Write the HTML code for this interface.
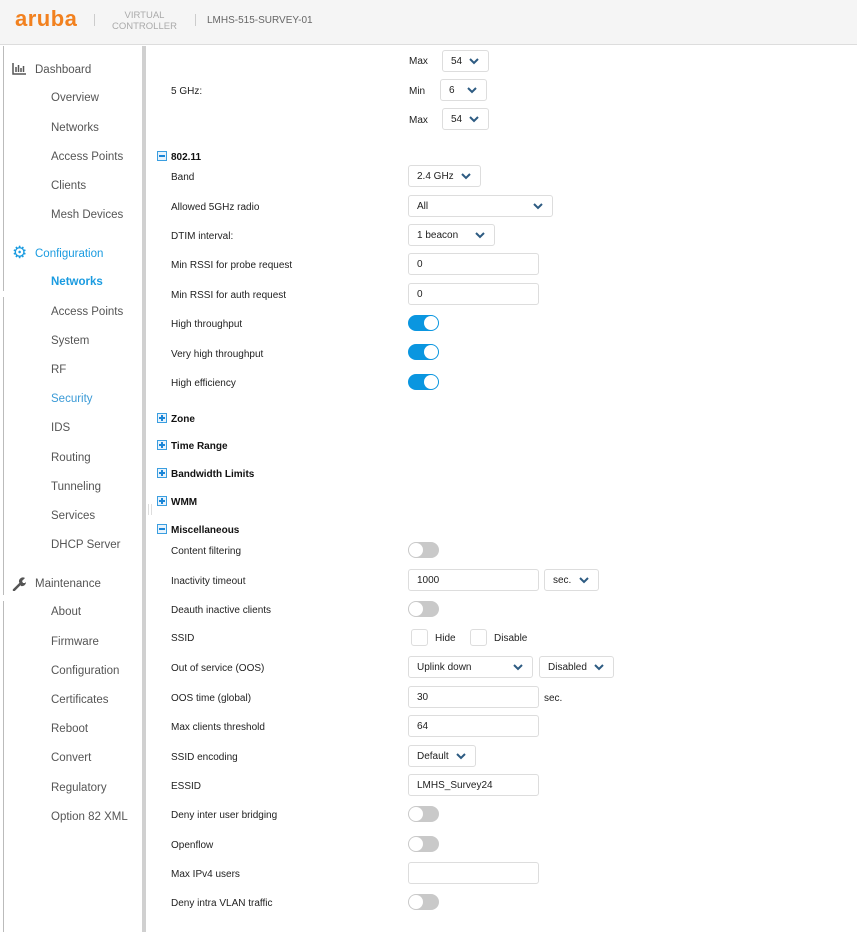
<!DOCTYPE html>
<html><head><meta charset="utf-8"><style>
*{box-sizing:border-box;margin:0;padding:0}
body{width:857px;height:932px;overflow:hidden;background:#fff;font-family:"Liberation Sans",Arial,sans-serif;position:relative;color:#222}
.hdr{position:absolute;left:0;top:0;width:857px;height:45px;background:#f5f5f5;border-bottom:1px solid #ddd}
.a{position:absolute}
.side{font-size:11.5px;color:#555;white-space:nowrap}
.sh{font-size:11.5px;color:#555}
.lb{font-size:10px;color:#222;white-space:nowrap}
.sec{font-size:10px;font-weight:bold;color:#111;white-space:nowrap}
.lb,.sec,.side,.sh{margin-top:2px}
.box{position:absolute;border:1px solid #ddd;border-radius:3px;background:#fff;font-size:10px;color:#222;padding-left:8px;line-height:21px}
.sel svg{position:absolute;right:9px;top:7px}
.tg{position:absolute;width:31px;height:16px;border-radius:8px;background:#c9c9c9}
.tg::after{content:"";position:absolute;left:1px;top:1px;width:14px;height:14px;border-radius:50%;background:#fff}
.tg.on{background:#0a96e0}
.tg.on::after{left:16px}
.pm{position:absolute;left:157px;width:10px;height:10px;border:1px solid #3a9ee0;background:#e8f3fc}
.pm::before{content:"";position:absolute;left:1px;top:3px;width:6px;height:2px;background:#1a86d8}
.pm.p::after{content:"";position:absolute;left:3px;top:1px;width:2px;height:6px;background:#1a86d8}
.cb{position:absolute;width:17px;height:17px;border:1px solid #ddd;border-radius:3px;background:#fff}
</style></head><body>
<div class="hdr"></div>
<div class="a" style="left:15px;top:6px;font-size:22px;font-weight:bold;color:#f2811f;letter-spacing:0.5px">aruba</div>
<div class="a" style="left:94px;top:14px;width:1px;height:12px;background:#ccc"></div>
<div class="a" style="left:112px;top:10px;font-size:9.5px;color:#aaa;text-align:center;line-height:11px">VIRTUAL<br>CONTROLLER</div>
<div class="a" style="left:195px;top:14px;width:1px;height:12px;background:#ccc"></div>
<div class="a" style="left:207px;top:15px;font-size:10px;color:#666">LMHS-515-SURVEY-01</div>
<div class="a" style="left:3px;top:46px;width:1px;height:245px;background:#bbb"></div>
<div class="a" style="left:3px;top:297px;width:1px;height:298px;background:#bbb"></div>
<div class="a" style="left:3px;top:601px;width:1px;height:331px;background:#bbb"></div>
<div class="a" style="left:142px;top:46px;width:4px;height:886px;background:#d0d0d0"></div>
<div class="a" style="left:148px;top:504px;width:1px;height:11px;background:#ddd"></div>
<div class="a" style="left:151px;top:504px;width:1px;height:11px;background:#ddd"></div>

<svg class="a" style="left:12px;top:63px" width="14" height="12"><path d="M1 0v11h13" stroke="#555" stroke-width="1.5" fill="none"/><path d="M4 4v5M6.5 2v7M9 5v4M11.5 3v6" stroke="#555" stroke-width="1.5"/></svg>
<div class="a sh" style="left:35px;top:62px">Dashboard</div>
<div class="a side" style="left:51px;top:90px">Overview</div>
<div class="a side" style="left:51px;top:120px">Networks</div>
<div class="a side" style="left:51px;top:149px">Access Points</div>
<div class="a side" style="left:51px;top:178px">Clients</div>
<div class="a side" style="left:51px;top:207px">Mesh Devices</div>
<div class="a" style="left:12px;top:244px;font-size:17px;color:#1a9be0;line-height:17px">⚙</div>
<div class="a sh" style="left:35px;top:246px;color:#1a9be0">Configuration</div>
<div class="a side" style="left:51px;top:274px;color:#1a9be0;font-weight:bold">Networks</div>
<div class="a side" style="left:51px;top:304px">Access Points</div>
<div class="a side" style="left:51px;top:333px">System</div>
<div class="a side" style="left:51px;top:362px">RF</div>
<div class="a side" style="left:51px;top:391px;color:#3a9ad6">Security</div>
<div class="a side" style="left:51px;top:420px">IDS</div>
<div class="a side" style="left:51px;top:450px">Routing</div>
<div class="a side" style="left:51px;top:479px">Tunneling</div>
<div class="a side" style="left:51px;top:508px">Services</div>
<div class="a side" style="left:51px;top:537px">DHCP Server</div>
<svg class="a" style="left:12px;top:577px" width="14" height="14"><path d="M2 13l6-6" stroke="#555" stroke-width="2.5" stroke-linecap="round"/><path d="M7 5a4 4 0 0 1 6-4l-3 3 1 2 2 0 1-1a4 4 0 0 1-5 4z" fill="#555"/></svg>
<div class="a sh" style="left:35px;top:576px">Maintenance</div>
<div class="a side" style="left:51px;top:604px">About</div>
<div class="a side" style="left:51px;top:634px">Firmware</div>
<div class="a side" style="left:51px;top:663px">Configuration</div>
<div class="a side" style="left:51px;top:692px">Certificates</div>
<div class="a side" style="left:51px;top:721px">Reboot</div>
<div class="a side" style="left:51px;top:750px">Convert</div>
<div class="a side" style="left:51px;top:780px">Regulatory</div>
<div class="a side" style="left:51px;top:809px">Option 82 XML</div>

<!-- content -->
<div class="a lb" style="left:409px;top:54px">Max</div>
<div class="box sel" style="left:442px;top:50px;width:47px;height:22px">54<svg width="10" height="7"><path d="M1 1l4 4 4-4" stroke="#2d5b82" stroke-width="2" fill="none"/></svg></div>
<div class="a lb" style="left:171px;top:84px">5 GHz:</div>
<div class="a lb" style="left:409px;top:84px">Min</div>
<div class="box sel" style="left:440px;top:79px;width:47px;height:22px">6<svg width="10" height="7"><path d="M1 1l4 4 4-4" stroke="#2d5b82" stroke-width="2" fill="none"/></svg></div>
<div class="a lb" style="left:409px;top:113px">Max</div>
<div class="box sel" style="left:442px;top:108px;width:47px;height:22px">54<svg width="10" height="7"><path d="M1 1l4 4 4-4" stroke="#2d5b82" stroke-width="2" fill="none"/></svg></div>

<div class="pm" style="top:151px"></div><div class="a sec" style="left:171px;top:150px">802.11</div>
<div class="a lb" style="left:171px;top:170px">Band</div>
<div class="box sel" style="left:408px;top:165px;width:73px;height:22px">2.4 GHz<svg width="10" height="7"><path d="M1 1l4 4 4-4" stroke="#2d5b82" stroke-width="2" fill="none"/></svg></div>
<div class="a lb" style="left:171px;top:200px">Allowed 5GHz radio</div>
<div class="box sel" style="left:408px;top:195px;width:145px;height:22px">All<svg width="10" height="7"><path d="M1 1l4 4 4-4" stroke="#2d5b82" stroke-width="2" fill="none"/></svg></div>
<div class="a lb" style="left:171px;top:229px">DTIM interval:</div>
<div class="box sel" style="left:408px;top:224px;width:87px;height:22px">1 beacon<svg width="10" height="7"><path d="M1 1l4 4 4-4" stroke="#2d5b82" stroke-width="2" fill="none"/></svg></div>
<div class="a lb" style="left:171px;top:258px">Min RSSI for probe request</div>
<div class="box" style="left:408px;top:253px;width:131px;height:22px">0</div>
<div class="a lb" style="left:171px;top:288px">Min RSSI for auth request</div>
<div class="box" style="left:408px;top:283px;width:131px;height:22px">0</div>
<div class="a lb" style="left:171px;top:317px">High throughput</div>
<div class="tg on" style="left:408px;top:315px"></div>
<div class="a lb" style="left:171px;top:347px">Very high throughput</div>
<div class="tg on" style="left:408px;top:344px"></div>
<div class="a lb" style="left:171px;top:376px">High efficiency</div>
<div class="tg on" style="left:408px;top:374px"></div>

<div class="pm p" style="top:413px"></div><div class="a sec" style="left:171px;top:412px">Zone</div>
<div class="pm p" style="top:440px"></div><div class="a sec" style="left:171px;top:439px">Time Range</div>
<div class="pm p" style="top:468px"></div><div class="a sec" style="left:171px;top:467px">Bandwidth Limits</div>
<div class="pm p" style="top:496px"></div><div class="a sec" style="left:171px;top:495px">WMM</div>
<div class="pm" style="top:524px"></div><div class="a sec" style="left:171px;top:523px">Miscellaneous</div>

<div class="a lb" style="left:171px;top:544px">Content filtering</div>
<div class="tg" style="left:408px;top:542px"></div>
<div class="a lb" style="left:171px;top:574px">Inactivity timeout</div>
<div class="box" style="left:408px;top:569px;width:131px;height:22px">1000</div>
<div class="box sel" style="left:544px;top:569px;width:55px;height:22px">sec.<svg width="10" height="7"><path d="M1 1l4 4 4-4" stroke="#2d5b82" stroke-width="2" fill="none"/></svg></div>
<div class="a lb" style="left:171px;top:603px">Deauth inactive clients</div>
<div class="tg" style="left:408px;top:601px"></div>
<div class="a lb" style="left:171px;top:631px">SSID</div>
<div class="cb" style="left:411px;top:629px"></div><div class="a lb" style="left:435px;top:631px">Hide</div>
<div class="cb" style="left:470px;top:629px"></div><div class="a lb" style="left:494px;top:631px">Disable</div>
<div class="a lb" style="left:171px;top:661px">Out of service (OOS)</div>
<div class="box sel" style="left:408px;top:656px;width:125px;height:22px">Uplink down<svg width="10" height="7"><path d="M1 1l4 4 4-4" stroke="#2d5b82" stroke-width="2" fill="none"/></svg></div>
<div class="box sel" style="left:539px;top:656px;width:75px;height:22px">Disabled<svg width="10" height="7"><path d="M1 1l4 4 4-4" stroke="#2d5b82" stroke-width="2" fill="none"/></svg></div>
<div class="a lb" style="left:171px;top:691px">OOS time (global)</div>
<div class="box" style="left:408px;top:686px;width:131px;height:22px">30</div>
<div class="a lb" style="left:544px;top:691px">sec.</div>
<div class="a lb" style="left:171px;top:720px">Max clients threshold</div>
<div class="box" style="left:408px;top:715px;width:131px;height:22px">64</div>
<div class="a lb" style="left:171px;top:750px">SSID encoding</div>
<div class="box sel" style="left:408px;top:745px;width:68px;height:22px">Default<svg width="10" height="7"><path d="M1 1l4 4 4-4" stroke="#2d5b82" stroke-width="2" fill="none"/></svg></div>
<div class="a lb" style="left:171px;top:779px">ESSID</div>
<div class="box" style="left:408px;top:774px;width:131px;height:22px">LMHS_Survey24</div>
<div class="a lb" style="left:171px;top:808px">Deny inter user bridging</div>
<div class="tg" style="left:408px;top:806px"></div>
<div class="a lb" style="left:171px;top:838px">Openflow</div>
<div class="tg" style="left:408px;top:836px"></div>
<div class="a lb" style="left:171px;top:867px">Max IPv4 users</div>
<div class="box" style="left:408px;top:862px;width:131px;height:22px"></div>
<div class="a lb" style="left:171px;top:896px">Deny intra VLAN traffic</div>
<div class="tg" style="left:408px;top:894px"></div>
</body></html>
